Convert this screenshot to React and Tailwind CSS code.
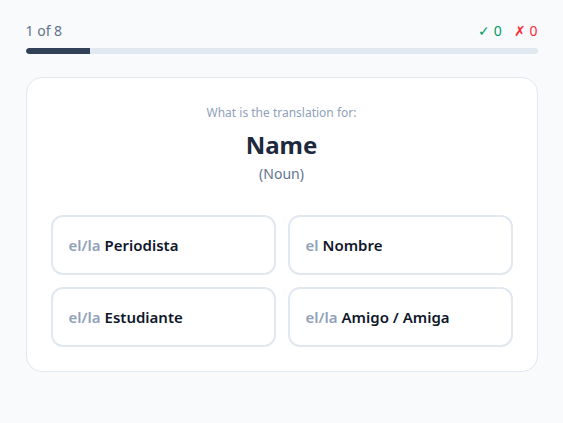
const options = [
  { article: 'el/la', word: 'Periodista' },
  { article: 'el', word: 'Nombre' },
  { article: 'el/la', word: 'Estudiante' },
  { article: 'el/la', word: 'Amigo / Amiga' },
];

export default function App() {
  const current = 1;
  const total = 8;
  return (
    <div
      className="min-h-screen bg-slate-50 pt-[21px]"
      style={{ fontFamily: '"Noto Sans", "Open Sans", sans-serif' }}
    >
      <div className="mx-auto max-w-lg">
        <div className="flex items-center justify-between text-sm text-slate-500">
          <span>
            {current} of {total}
          </span>
          <div className="flex items-center gap-3">
            <span className="text-emerald-600">✓ 0</span>
            <span className="text-red-500">✗ 0</span>
          </div>
        </div>

        <div className="mt-[7px] h-1.5 w-full overflow-hidden rounded-full bg-slate-200">
          <div className="h-full rounded-l-full bg-slate-700" style={{ width: `${(current / total) * 100}%` }} />
        </div>

        <div className="mt-[23px] rounded-2xl border border-slate-200 bg-white p-6">
          <div className="text-center">
            <p className="mt-[3px] text-xs text-slate-400">What is the translation for:</p>
            <h2 className="mt-[8px] text-2xl font-bold text-slate-800">Name</h2>
            <p className="mt-[3px] text-sm text-slate-500">(Noun)</p>
          </div>

          <div className="mt-[31px] grid grid-cols-2 gap-3">
            {options.map((o) => (
              <button
                key={o.word}
                className="flex h-[60px] items-center rounded-xl border-2 border-slate-200 bg-white px-4 text-left text-[15px] font-semibold"
              >
                <span className="text-slate-400">{o.article}</span>
                <span className="ml-1 text-slate-900">{o.word}</span>
              </button>
            ))}
          </div>
        </div>
      </div>
    </div>
  );
}
